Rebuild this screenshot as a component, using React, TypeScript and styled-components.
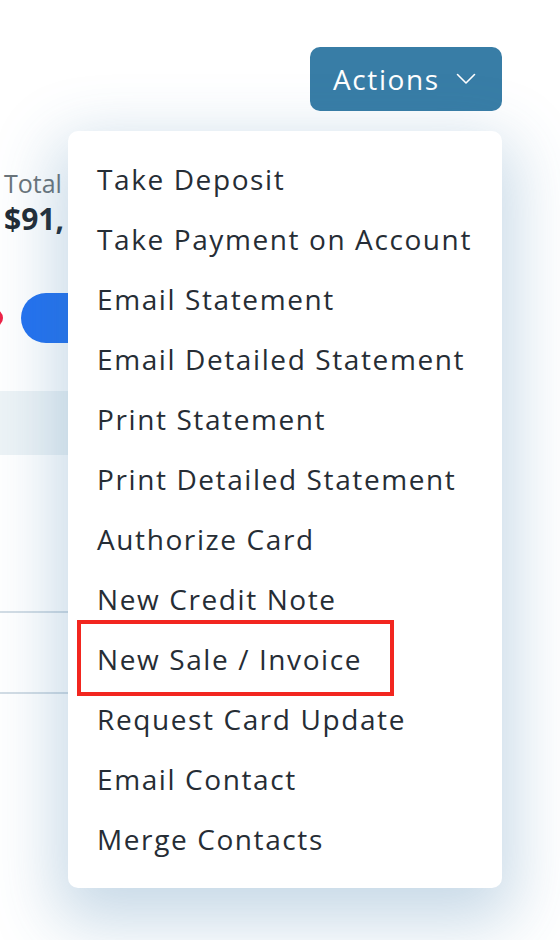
import React from "react";
import styled, { createGlobalStyle } from "styled-components";

const Global = createGlobalStyle`
  html, body { margin: 0; padding: 0; background: #ffffff; }
  body { font-family: "Open Sans", "Noto Sans", sans-serif; }
`;

const Page = styled.div`
  position: relative;
  width: 560px;
  height: 940px;
  overflow: hidden;
  background: #ffffff;
`;

const Header = styled.div`
  display: flex;
  justify-content: flex-end;
  padding: 47px 58px 0 0;
  position: relative;
  z-index: 2;
`;

const ActionsWrap = styled.div`
  position: relative;
`;

const ActionsButton = styled.button`
  display: flex;
  align-items: center;
  gap: 16px;
  width: 192px;
  height: 64px;
  padding: 0 0 0 23px;
  border: none;
  border-radius: 10px;
  background: #387da6;
  color: #ffffff;
  font-family: "Open Sans", "Noto Sans", sans-serif;
  font-size: 28px;
  font-weight: 400;
  letter-spacing: 1.6px;
  cursor: pointer;
`;

const Menu = styled.ul`
  position: absolute;
  top: 84px;
  left: -242px;
  width: 434px;
  margin: 0;
  padding: 18px 0 19px;
  list-style: none;
  background: #ffffff;
  border-radius: 10px;
  box-shadow: 0 22px 64px 12px rgba(54, 120, 170, 0.28);
`;

const MenuItem = styled.li`
  position: relative;
  height: 60px;
  display: flex;
  align-items: center;
  padding-left: 29px;
  font-size: 28px;
  color: #262d35;
  letter-spacing: 1.6px;
  white-space: nowrap;
`;

const Highlight = styled.span`
  position: absolute;
  left: 9px;
  top: -9px;
  width: 317px;
  height: 76px;
  box-sizing: border-box;
  border: 4px solid #f2261f;
  pointer-events: none;
`;

const Content = styled.div`
  display: flex;
  flex-direction: column;
  margin-left: -40px;
  width: 480px;
  position: relative;
  z-index: 1;
`;

const SummaryCard = styled.div`
  margin-top: 26px;
  height: 126px;
  box-sizing: border-box;
  padding: 32px 0 0 44px;
  background: #ffffff;
  border-radius: 10px;
  display: flex;
  flex-direction: column;
  gap: 6px;
`;

const Label = styled.span`
  font-size: 25px;
  color: #6b7479;
  line-height: 28px;
`;

const Amount = styled.span`
  font-size: 30px;
  font-weight: 700;
  color: #222b34;
  line-height: 32px;
`;

const Toolbar = styled.div`
  display: flex;
  align-items: center;
  gap: 18px;
  margin-top: 30px;
  height: 50px;
`;

const RedDot = styled.span`
  width: 18px;
  height: 18px;
  margin-left: 25px;
  border-radius: 50%;
  background: #ee2247;
`;

const BluePill = styled.span`
  width: 200px;
  height: 50px;
  border-radius: 25px;
  background: #2472f0;
`;

const TableHead = styled.div`
  margin-top: 48px;
  height: 64px;
  background: #edf3f6;
`;

const Row = styled.div<{ $h: number }>`
  height: ${(p) => p.$h}px;
  border-bottom: 2px solid #d3dde5;
`;

const Chevron = () => (
  <svg width="20" height="12" viewBox="0 0 20 12" fill="none">
    <polyline
      points="1.5,1.5 10,10 18.5,1.5"
      stroke="#ffffff"
      strokeWidth="1.6"
      strokeLinecap="round"
      strokeLinejoin="round"
    />
  </svg>
);

const items = [
  "Take Deposit",
  "Take Payment on Account",
  "Email Statement",
  "Email Detailed Statement",
  "Print Statement",
  "Print Detailed Statement",
  "Authorize Card",
  "New Credit Note",
  "New Sale / Invoice",
  "Request Card Update",
  "Email Contact",
  "Merge Contacts",
];

export default function App() {
  return (
    <Page>
      <Global />
      <Header>
        <ActionsWrap>
          <ActionsButton>
            Actions <Chevron />
          </ActionsButton>
          <Menu>
            {items.map((it) => (
              <MenuItem key={it}>
                {it}
                {it === "New Sale / Invoice" && <Highlight />}
              </MenuItem>
            ))}
          </Menu>
        </ActionsWrap>
      </Header>
      <Content>
        <SummaryCard>
          <Label>Total</Label>
          <Amount>$91,</Amount>
        </SummaryCard>
        <Toolbar>
          <RedDot />
          <BluePill />
        </Toolbar>
        <TableHead />
        <Row $h={156} />
        <Row $h={79} />
      </Content>
    </Page>
  );
}
